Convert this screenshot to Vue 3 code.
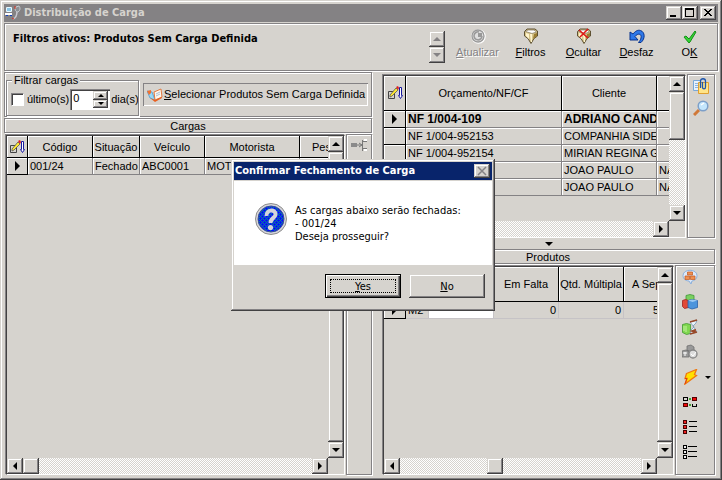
<script setup>
import { ref } from 'vue'

const days = ref(0)
const onlyRecent = ref(false)

const loads = [['001/24', 'Fechado', 'ABC0001', 'MOT', '']]
const orders = [
  { doc: 'NF 1/004-109', client: 'ADRIANO CAND', city: '', current: true },
  { doc: 'NF 1/004-952153', client: 'COMPANHIA SIDE', city: '' },
  { doc: 'NF 1/004-952154', client: 'MIRIAN REGINA G', city: '' },
  { doc: '', client: 'JOAO PAULO', city: 'NA' },
  { doc: '', client: 'JOAO PAULO', city: 'NA' },
]
</script>

<template>
  <main class="window">
    <header class="titlebar">
      <svg class="app-icon" viewBox="0 0 16 16" aria-hidden="true">
        <rect x="1" y="2" width="6" height="5" rx="1" fill="#e8f8ff" />
        <rect x="2" y="3" width="4" height="3" fill="#8ac6e8" />
        <path d="M0 8h7v2H0z" fill="#fff" /><path d="M1 10h2v1H1zM5 10h2v1H5z" fill="#1040c0" />
        <path d="M8 14c3-1 4-4 4-8" stroke="#c8c8d0" stroke-width="1.500" fill="none" />
        <path d="M11 2c-2 3 0 5 2 5 3-2 2-5 1-6z" fill="#8c9094" stroke="#c9ced2" />
        <path d="M10 1v3" stroke="#d03020" /><path d="M7 13l2 1" stroke="#d03020" />
      </svg>
      <h1>Distribuição de Carga</h1>
      <div class="win-buttons">
        <button class="bevel cap" aria-label="Minimizar"><svg viewBox="0 0 10 10"><path d="M1 7h6v2H1z" /></svg></button>
        <button class="bevel cap" aria-label="Maximizar"><svg viewBox="0 0 10 10"><path d="M0 0h9v9H0zM1 2v6h7V2z" fill-rule="evenodd" /></svg></button>
        <button class="bevel cap close" aria-label="Fechar"><svg viewBox="0 0 10 10"><path d="M1 1h2v1h1v1h2v-1h1v-1h2v1h-1v1h-1v1h-1v1h1v1h1v1h1v1h-2v-1h-1v-1h-2v1h-1v1h-2v-1h1v-1h1v-1h1v-1h-1v-1h-1v-1h-1z" /></svg></button>
      </div>
    </header>

    <section class="topbar etched">
      <p class="active-filters">Filtros ativos: Produtos Sem Carga Definida</p>
      <div class="pager">
        <button class="bevel sb" disabled aria-label="Anterior"><i class="up dim"></i></button>
        <button class="bevel sb" disabled aria-label="Próximo"><i class="down dim"></i></button>
      </div>
      <nav class="actions">
        <button class="action" disabled>
          <svg viewBox="0 0 16 16"><circle cx="8.500" cy="8.500" r="6.500" fill="none" stroke="#fff" stroke-width="1.500" /><circle cx="8" cy="8" r="6" fill="#dedede" stroke="#999" stroke-width="1.300" /><path d="M12 8a4 4 0 1 1-3-4" fill="none" stroke="#999" stroke-width="1.500" /><path d="M8 5h4v4H8z" fill="#999" /></svg>
          <span><u>A</u>tualizar</span>
        </button>
        <button class="action">
          <svg viewBox="0 0 16 16"><path d="M1.500 3.500L4 1h8l2.500 2v5L11 10.500 8 15.500 5 10.500 1.500 8z" fill="#d8c58a" stroke="#5e5132" /><path d="M2.500 3.500L5 2h6l2.500 2L9 5.500z" fill="#fff" stroke="#80745a" stroke-width=".7" /><path d="M3 5l3 1v5L3 8zM7 6h2v8H8z" fill="#fff5cf" /><path d="M11 6l3-1v3l-4 3z" fill="#9a7d33" /></svg>
          <span><u>F</u>iltros</span>
        </button>
        <button class="action">
          <svg viewBox="0 0 16 16"><path d="M1.500 3.500L4 1h8l2.500 2v5L11 10.500 8 15.500 5 10.500 1.500 8z" fill="#d8c58a" stroke="#5e5132" /><path d="M2.500 3.500L5 2h6l2.500 2L9 5.500z" fill="#fff" stroke="#80745a" stroke-width=".7" /><path d="M3 5l3 1v5L3 8zM7 6h2v8H8z" fill="#fff5cf" /><path d="M11 6l3-1v3l-4 3z" fill="#9a7d33" /><path d="M3 2l9 8M12 1L4 9" stroke="#e01818" stroke-width="1.600" /></svg>
          <span><u>O</u>cultar</span>
        </button>
        <button class="action">
          <svg viewBox="0 0 16 16"><path d="M1 4v8h8L6 8.500C9 4.500 13 6 12 10c-.3 2-1.500 3-2.500 4.500H12c4.500-4 4-10.500-.5-12-3-1-5.500 1-7.500 3.500z" fill="#2f78e8" stroke="#08328c" /></svg>
          <span><u>D</u>esfaz</span>
        </button>
        <button class="action">
          <svg viewBox="0 0 16 16"><path d="M2 9l2-1 3 3 6-8 1 1-6 10-1 1z" fill="#35d535" stroke="#159018" /></svg>
          <span>O<u>K</u></span>
        </button>
      </nav>
    </section>

    <div class="workspace">
      <div class="column">
        <section class="filters etched">
          <fieldset>
            <legend>Filtrar cargas</legend>
            <input id="recent" v-model="onlyRecent" type="checkbox" />
            <label for="recent">último(s)</label>
            <div class="spin">
              <input v-model="days" type="text" inputmode="numeric" size="1" aria-label="Dias" />
              <div class="spin-buttons">
                <button class="bevel" aria-label="Mais" @click="days++"><i class="up"></i></button>
                <button class="bevel" aria-label="Menos" @click="days--"><i class="down"></i></button>
              </div>
            </div>
            <span>dia(s)</span>
          </fieldset>
          <button class="select-products">
            <svg viewBox="0 0 16 16" aria-hidden="true"><path d="M0 4l5 1 3 8-5-2z" fill="#9bd8f4" stroke="#4a9ad0" stroke-width=".8" /><path d="M0 4l4-1v3L2 8z" fill="#f07030" /><path d="M7 5l7-3 1 8-7 3z" fill="#fff6ea" stroke="#e07840" /><path d="M9 7l4-2M9 9l4-2" stroke="#a8c0d8" /><path d="M3 11l5 2 7-3v1l-7 4z" fill="#e86020" /></svg>
            <span><u>S</u>elecionar Produtos Sem Carga Definida</span>
          </button>
        </section>
        <h2 class="caption etched">Cargas</h2>
        <div class="pane loads-pane">
          <div class="frame">
            <div class="view">
              <table class="loads">
                <colgroup><col class="w21" /><col class="w65" /><col class="w47" /><col class="w65" /><col class="w95" /><col class="w65" /></colgroup>
                <thead>
                  <tr>
                    <th><svg class="sort" viewBox="0 0 16 14"><path d="M1.500 5.500h6v7h-6z" fill="none" stroke="#444" /><path d="M3 9l6-7 2 2-6 6-2 1z" fill="#ffe830" stroke="#555" stroke-width=".8" /><path d="M9 1l2-1 1 2-1 2z" fill="#e02020" /><path d="M12.500 1.500h2v8h1l-2 3-2-3h1z" fill="#fff" stroke="#1818a0" /></svg></th>
                    <th>Código</th><th>Situação</th><th>Veículo</th><th>Motorista</th><th class="cut">Pes</th>
                  </tr>
                </thead>
                <tbody>
                  <tr v-for="row in loads" :key="row[0]">
                    <td class="mark"><i class="right"></i></td>
                    <td v-for="(cell, i) in row" :key="i">{{ cell }}</td>
                  </tr>
                </tbody>
              </table>
            </div>
            <div class="vbar">
              <button class="bevel sb" aria-label="Acima"><i class="up"></i></button>
              <div class="bevel thumb fill"></div>
              <button class="bevel sb" aria-label="Abaixo"><i class="down"></i></button>
            </div>
            <div class="hbar">
              <button class="bevel sb" aria-label="Esquerda"><i class="left"></i></button>
              <div class="bevel thumb"></div>
              <div class="fill"></div>
              <button class="bevel sb" aria-label="Direita"><i class="right"></i></button>
            </div>
          </div>
          <aside class="tools slim etched">
            <button class="tool" aria-label="Vincular" disabled><svg viewBox="0 0 16 16"><path d="M0 6h6v4H0z" fill="#8a8a8a" /><path d="M6 8h5M8 6l3 2-3 2M11.500 3v11M11 4.500h5M11 11.500h5" stroke="#777" fill="none" /><path d="M13 2h3v2h-3zM13 12h3v2h-3z" fill="#fff" /></svg></button>
          </aside>
        </div>
      </div>

      <div class="splitter"></div>

      <div class="column details">
        <div class="pane orders-pane">
          <div class="frame">
            <div class="view">
              <table class="orders tall">
                <colgroup><col class="w22" /><col class="w156" /><col class="w95" /><col class="w65" /></colgroup>
                <thead>
                  <tr>
                    <th><svg class="sort" viewBox="0 0 16 14"><path d="M1.500 5.500h6v7h-6z" fill="none" stroke="#444" /><path d="M3 9l6-7 2 2-6 6-2 1z" fill="#ffe830" stroke="#555" stroke-width=".8" /><path d="M9 1l2-1 1 2-1 2z" fill="#e02020" /><path d="M12.500 1.500h2v8h1l-2 3-2-3h1z" fill="#fff" stroke="#1818a0" /></svg></th>
                    <th>Orçamento/NF/CF</th><th>Cliente</th><th></th>
                  </tr>
                </thead>
                <tbody>
                  <tr v-for="(o, i) in orders" :key="i" :class="{ current: o.current }">
                    <td class="mark"><i v-if="o.current" class="right"></i></td>
                    <td>{{ o.doc }}</td><td>{{ o.client }}</td><td>{{ o.city }}</td>
                  </tr>
                </tbody>
              </table>
            </div>
            <div class="vbar">
              <button class="bevel sb" aria-label="Acima"><i class="up"></i></button>
              <div class="bevel thumb long"></div>
              <div class="fill"></div>
              <button class="bevel sb" aria-label="Abaixo"><i class="down"></i></button>
            </div>
            <div class="hbar">
              <button class="bevel sb" aria-label="Esquerda"><i class="left"></i></button>
              <div class="bevel thumb"></div>
              <div class="fill"></div>
              <button class="bevel sb" aria-label="Direita"><i class="right"></i></button>
            </div>
          </div>
          <aside class="tools mid etched">
            <button class="tool" aria-label="Anexos"><svg viewBox="0 0 16 16"><path d="M.5 2.500h7v10h-7z" fill="#e8f2fc" stroke="#78a8d8" /><path d="M2 5.500h3M2 7.500h3M2 9.500h3" stroke="#8ab4e0" /><path d="M5.500 4.500h10v11h-10z" fill="#ffe488" stroke="#e0a030" /><path d="M7.500 10V3c0-3 5-3 5 0v6c0 2.500-3 2.500-3 0V4" fill="none" stroke="#1d55ac" stroke-width="1.300" /></svg></button>
            <button class="tool" aria-label="Localizar"><svg viewBox="0 0 16 16"><path d="M1 15l5-5" stroke="#d07838" stroke-width="3" /><circle cx="10" cy="6" r="4.800" fill="#c4e6fc" stroke="#7d9fc8" stroke-width="1.500" /><path d="M8 5l3-2" stroke="#fff" stroke-width="1.500" /></svg></button>
          </aside>
        </div>

        <div class="collapse"><i class="down"></i></div>
        <h2 class="caption etched">Produtos</h2>

        <div class="pane products-pane">
          <div class="frame">
            <div class="view">
              <table class="products tall">
                <colgroup><col class="w22" /><col class="w23" /><col class="w65" /><col class="w65" /><col class="w65" /><col class="w65" /></colgroup>
                <thead>
                  <tr><th></th><th></th><th></th><th>Em Falta</th><th>Qtd. Múltipla</th><th class="cut">A Sep</th></tr>
                </thead>
                <tbody>
                  <tr><td class="mark"><i class="right"></i></td><td>M2</td><td class="edit"></td><td class="num">0</td><td class="num">0</td><td class="qty">5</td></tr>
                </tbody>
              </table>
            </div>
            <div class="vbar">
              <button class="bevel sb" aria-label="Acima"><i class="up"></i></button>
              <div class="bevel thumb fill"></div>
              <button class="bevel sb" aria-label="Abaixo"><i class="down"></i></button>
            </div>
            <div class="hbar">
              <button class="bevel sb" aria-label="Esquerda"><i class="left"></i></button>
              <div class="fill before"></div>
              <div class="bevel thumb"></div>
              <div class="fill after"></div>
              <button class="bevel sb" aria-label="Direita"><i class="right"></i></button>
            </div>
          </div>
          <aside class="tools wide etched">
            <button class="tool" aria-label="Estoque"><svg viewBox="0 0 16 16"><path d="M1 6.500c0-7 14-7 14 0 0 4-3 5-5 5.500l-1 3-2-3C4 12 1 10 1 6.500z" fill="#dce8f8" stroke="#8cb0dc" /><path d="M5.500 3h5v3h-5zM3 7h4.500v3.500H3zM8.500 7H13v3.500H8.500z" fill="#f09050" stroke="#c05820" stroke-width=".7" /></svg></button>
            <button class="tool" aria-label="Produtos"><svg viewBox="0 0 16 16"><path d="M4 1.500L8 .5l4 1V7H4z" fill="#7bd060" stroke="#409838" stroke-width=".8" /><path d="M.5 6.500l3-1 3 1v7l-4 1-2-2z" fill="#e04838" stroke="#a02020" stroke-width=".8" /><path d="M6 6.500l4-1 5.500 1v7l-5.500 1.500-4-1.500z" fill="#4c94dc" stroke="#2860a8" stroke-width=".8" /><path d="M6 6.500l4-1 5.500 1-5 1.500z" fill="#9ac8f4" /></svg></button>
            <button class="tool" aria-label="Pendentes"><svg viewBox="0 0 16 16"><path d="M.5 5.500l4-1 4 1v9l-4 1-4-2z" fill="#80d850" stroke="#409830" stroke-width=".8" /><path d="M2 7v5M4 7v6" stroke="#c4f4a0" /><path d="M8 3l7-2-1 3-3 3 4 6-7 2 1-4 3-3z" fill="#e8f4fc" stroke="#7898b8" stroke-width=".8" /><path d="M8 3l7-2M8 15l7-2M10 12l3-1v2z" stroke="#984828" stroke-width="1.800" fill="#984828" /></svg></button>
            <button class="tool" aria-label="Conferir" disabled><svg viewBox="0 0 16 16"><path d="M5 2l4-1 3 2v4H5zM0 7l4-1 3 1v6H0z" fill="#999" stroke="#707070" stroke-width=".8" /><circle cx="11" cy="10" r="4" fill="#ddd" stroke="#858585" stroke-width="1.300" /><path d="M9 10l2 2 3-4M1 9h4M3 8v4" stroke="#fff" fill="none" /></svg></button>
            <div class="menu">
              <button class="tool" aria-label="Ações"><svg viewBox="0 0 16 16"><path d="M4.500 4.500L14.500.5l-2 5 2 1-11.500 8.500 2-5.500H3z" fill="#ffe000" stroke="#f07810" stroke-width="1.300" /><path d="M3 15l2-5.500H3" fill="none" stroke="#e04010" /></svg></button>
              <i class="down small"></i>
            </div>
            <button class="tool" aria-label="Inverter"><svg viewBox="0 0 16 16" shape-rendering="crispEdges"><path d="M1.500 3.500h4v3h-4zM10.500 12.500h4v-3M10.500 10v3" fill="none" stroke="#000" /><path d="M10.500 3.500h4v3h-4zM1.500 9.500h4v3h-4z" fill="#f00808" stroke="#500" /><path d="M7 4h2v2H7zM7 10h2v2H7z" fill="#40a030" /></svg></button>
            <button class="tool" aria-label="Marcar todos"><svg viewBox="0 0 16 16" shape-rendering="crispEdges"><path d="M1.500 1.500h3v3h-3zM1.500 6.500h3v3h-3zM1.500 11.500h3v3h-3z" fill="#f02020" stroke="#400" /><path d="M7 2.500h8M7 7.500h8M7 12.500h8" stroke="#000" /></svg></button>
            <button class="tool" aria-label="Desmarcar todos"><svg viewBox="0 0 16 16" shape-rendering="crispEdges"><path d="M1.500 1.500h3v3h-3zM1.500 6.500h3v3h-3zM1.500 11.500h3v3h-3z" fill="#eee" stroke="#000" /><path d="M6 2.500h9M6 7.500h9M6 12.500h9" stroke="#000" /></svg></button>
          </aside>
        </div>
      </div>
    </div>

    <section class="dialog" role="dialog" aria-labelledby="dialog-title">
      <header class="dialog-title">
        <h2 id="dialog-title">Confirmar Fechamento de Carga</h2>
        <button class="bevel cap" disabled aria-label="Fechar"><svg viewBox="0 0 10 10"><path d="M1 1l8 8M9 1l-8 8" stroke="#848284" stroke-width="1.500" /></svg></button>
      </header>
      <div class="dialog-body">
        <svg viewBox="0 0 32 32" aria-hidden="true">
          <defs><pattern id="dither" width="4" height="4" patternUnits="userSpaceOnUse"><rect width="4" height="4" fill="#0810f8" /><path d="M0 0h1v1H0zM1 1h1v1H1zM2 2h1v1H2zM3 3h1v1H3zM2 0h1v1H2zM0 2h1v1H0z" fill="#088298" /></pattern></defs>
          <circle cx="16" cy="16" r="15.500" fill="#d6d6da" stroke="#8c8c8c" />
          <circle cx="16" cy="16" r="13" fill="url(#dither)" stroke="#384c98" />
          <path d="M11.500 13c-.5-7 9.500-7 9-1.500-.2 3.500-5 3.500-5 8.500" fill="none" stroke="#d4d4dc" stroke-width="4" />
          <circle cx="15.500" cy="24.500" r="2.600" fill="#d4d4dc" />
        </svg>
        <p>As cargas abaixo serão fechadas:<br />- 001/24<br />Deseja prosseguir?</p>
      </div>
      <footer>
        <button class="push default"><span><u>Y</u>es</span></button>
        <button class="push bevel"><span><u>N</u>o</span></button>
      </footer>
    </section>
  </main>
</template>

<style>
body { margin: 0; overflow: hidden; background: #d6d3ce; }
</style>

<style scoped>
* { box-sizing: border-box; }
.window {
  height: 100vh; padding: 4px; display: flex; flex-direction: column;
  background: #d6d3ce; color: #000; font: 11px/13px "Liberation Sans", Arial, sans-serif;
  box-shadow: inset -1px -1px #424142, inset 1px 1px #d6d3ce, inset -2px -2px #848284, inset 2px 2px #fff;
}
h1, h2, p { margin: 0; font: inherit; }
button { padding: 0; margin: 0; border: 0; background: transparent; color: inherit; font: inherit; }
svg { display: block; }
.bevel {
  background: #d6d3ce;
  box-shadow: inset -1px -1px #424142, inset 1px 1px #d6d3ce, inset -2px -2px #848284, inset 2px 2px #fff;
}
.etched { border: 1px solid #848284; box-shadow: inset 1px 1px #fff, 1px 1px #fff; }

.titlebar { height: 18px; flex: none; display: flex; align-items: center; gap: 3px; padding: 0 2px 0 1px; background: #848284; color: #d6d3ce; }
.app-icon { width: 16px; height: 16px; }
.titlebar h1, .dialog-title h2 { flex: 1; font: bold 11px/16px "DejaVu Sans Condensed", Tahoma, sans-serif; }
.win-buttons { display: flex; }
.cap { width: 16px; height: 14px; display: flex; align-items: center; justify-content: center; }
.cap svg { width: 10px; height: 10px; }
.close { margin-left: 2px; }

.topbar { height: 48px; flex: none; margin-top: 1px; display: flex; align-items: flex-start; padding: 4px 1px 0 8px; }
.active-filters { flex: 1; padding-top: 4px; font: bold 11px/14px "DejaVu Sans Condensed", Tahoma, sans-serif; }
.pager { display: flex; flex-direction: column; padding-top: 3px; margin-right: 6px; }
.actions { display: flex; }
.action { width: 53px; display: flex; flex-direction: column; align-items: center; gap: 2px; }
.action svg { width: 16px; height: 16px; }
.action:disabled { color: #848284; text-shadow: 1px 1px #fff; }

.sb { width: 16px; height: 16px; flex: none; display: flex; align-items: center; justify-content: center; }
i { display: block; width: 0; height: 0; border: 0 solid transparent; }
.up { border-width: 0 4px 4px; border-bottom-color: #000; }
.down { border-width: 4px 4px 0; border-top-color: #000; }
.left { border-width: 4px 4px 4px 0; border-right-color: #000; }
.right { border-width: 4px 0 4px 4px; border-left-color: #000; }
.up.dim { border-bottom-color: #848284; }
.down.dim { border-top-color: #848284; }
.small { border-width: 3px 3px 0; }

.workspace { flex: 1; min-height: 0; display: grid; grid-template-columns: minmax(0, 369fr) 8px minmax(0, 337fr); grid-template-rows: minmax(0, 1fr); margin-top: 1px; }
.column { display: flex; flex-direction: column; min-width: 0; min-height: 0; }
.details { padding-right: 2px; }
.filters { height: 45px; flex: none; display: flex; align-items: flex-start; gap: 4px; padding: 1px; margin-right: 1px; }
fieldset { height: 42px; min-width: 0; width: 133px; flex: none; margin: 0; padding: 9px 0 0 5px; border: 0; position: relative; display: flex; align-items: center; gap: 1px; white-space: nowrap; }
fieldset::before { content: ""; position: absolute; inset: 6px 0 0 0; border: 1px solid #848284; box-shadow: inset 1px 1px #fff, 1px 1px #fff; pointer-events: none; }
legend { position: absolute; top: 0; left: 6px; padding: 0 2px; background: #d6d3ce; line-height: 13px; }
fieldset input[type="checkbox"] { appearance: none; width: 13px; height: 13px; flex: none; margin: 0 2px 0 0; background: #fff; border: 1px solid; border-color: #848284 #fff #fff #848284; box-shadow: inset 1px 1px #424142; }
.spin { width: 40px; height: 21px; flex: none; display: flex; padding: 2px; background: #fff; box-shadow: inset 1px 1px #848284, inset 2px 2px #424142, inset -1px -1px #fff; }
.spin input { flex: 1; min-width: 0; padding: 0 0 3px 1px; border: 0; background: none; font: 11px/13px "Liberation Sans", Arial, sans-serif; outline: 0; }
.spin-buttons { width: 15px; flex: none; display: flex; flex-direction: column; }
.spin-buttons button { flex: 1; display: flex; align-items: center; justify-content: center; }
.spin-buttons i { border-left-width: 3px; border-right-width: 3px; }
.spin-buttons .up { border-bottom-width: 3px; }
.spin-buttons .down { border-top-width: 3px; }
.select-products { flex: 1; min-width: 0; height: 23px; margin: 9px 2px 0 0; padding-left: 4px; display: flex; align-items: center; gap: 1px; white-space: nowrap; box-shadow: inset 1px 1px #848284, inset -1px -1px #fff; }
.select-products svg { width: 16px; height: 16px; flex: none; }
.caption { height: 15px; flex: none; margin: 1px 1px 0 0; text-align: center; line-height: 14px; }

.pane { flex: 1; min-height: 0; display: flex; gap: 1px; padding: 0 1px 1px 1px; }
.frame { flex: 1; min-width: 0; margin: 1px 0 0 1px; display: grid; grid-template: minmax(0, 1fr) 16px / minmax(0, 1fr) 16px; border: 1px solid; border-color: #424142 #fff #fff #424142; box-shadow: -1px -1px #848284; }
.view { overflow: hidden; }
.vbar { display: flex; flex-direction: column; }
.hbar { display: flex; }
.thumb { width: 16px; height: 16px; flex: none; }
.thumb.long { height: 48px; }
.fill { flex: 1; background: repeating-conic-gradient(#fff 0 25%, #d6d3ce 0 50%) 0 0 / 2px 2px; }
.thumb.fill { flex: 1; height: auto; background: #d6d3ce; }
.before { flex: 87; }
.after { flex: 138; }

table { width: 0; table-layout: fixed; border-collapse: separate; border-spacing: 0; }
th, td { overflow: hidden; padding: 0 2px; white-space: nowrap; font-size: 11px; line-height: 16px; border: solid #848284; border-width: 0 1px 1px 0; box-shadow: inset 1px 1px #fff; }
th { height: 22px; padding: 0; border-color: #000; font-weight: normal; text-align: center; }
.tall th { height: 35px; }
td { height: 17px; text-align: left; }
td.mark { padding: 0; border-color: #000; }
.mark i { margin: 0 auto; border-width: 5px 0 5px 5px; }
.sort { width: 16px; height: 14px; margin: 0 auto; }
th.cut { text-align: left; padding-left: 8px; }
.loads th.cut { padding-left: 12px; }
.current td { font-size: 12px; font-weight: bold; }
.products td:not(.mark) { border-color: #c6c3c6; box-shadow: none; }
.products td.edit { background: #fff; }
td.num { text-align: right; }
td.qty { text-align: left; padding-left: 29px; }
.w21 { width: 21px; } .w22 { width: 22px; } .w23 { width: 23px; } .w47 { width: 47px; } .w65 { width: 65px; } .w95 { width: 95px; } .w156 { width: 156px; }

.loads-pane { padding-top: 1px; }
.orders-pane { flex: 166 1 0; padding-top: 2px; }
.products-pane { flex: 212 1 0; padding-top: 1px; }
.collapse { height: 9px; flex: none; display: flex; justify-content: center; align-items: center; }
.tools { flex: none; display: flex; flex-direction: column; align-items: flex-start; }
.tool svg { width: 16px; height: 16px; }
.slim { width: 26px; padding: 2px 4px; }
.mid { width: 28px; padding: 3px 5px; gap: 6px; }
.wide { width: 40px; padding: 3px 6px; gap: 9px; }
.menu { display: flex; align-items: center; gap: 7px; }

.dialog { position: absolute; left: 50%; top: 50%; transform: translate(-130px, -81px); width: 264px; padding: 3px; background: #d6d3ce; box-shadow: inset -1px -1px #424142, inset 1px 1px #d6d3ce, inset -2px -2px #848284, inset 2px 2px #fff; font-family: "DejaVu Sans Condensed", Tahoma, sans-serif; }
.dialog-title { height: 18px; display: flex; align-items: center; padding: 0 2px 0 1px; background: #08246b; color: #fff; }
.dialog-body { display: flex; align-items: flex-start; gap: 8px; margin-top: 1px; padding: 22px 20px 22px 21px; background: #fff; white-space: nowrap; }
.dialog-body svg { width: 32px; height: 32px; }
.dialog-body p { padding-top: 1px; }
.dialog footer { display: flex; justify-content: flex-end; gap: 8px; padding: 9px 7px 10px; }
.push { width: 76px; height: 24px; }
.default { padding: 4px; border: 1px solid #000; background: #d6d3ce; box-shadow: inset 1px 1px #fff, inset -1px -1px #424142, inset -2px -2px #848284; }
.default span { display: block; height: 100%; border: 1px dotted #000; line-height: 13px; }
</style>
